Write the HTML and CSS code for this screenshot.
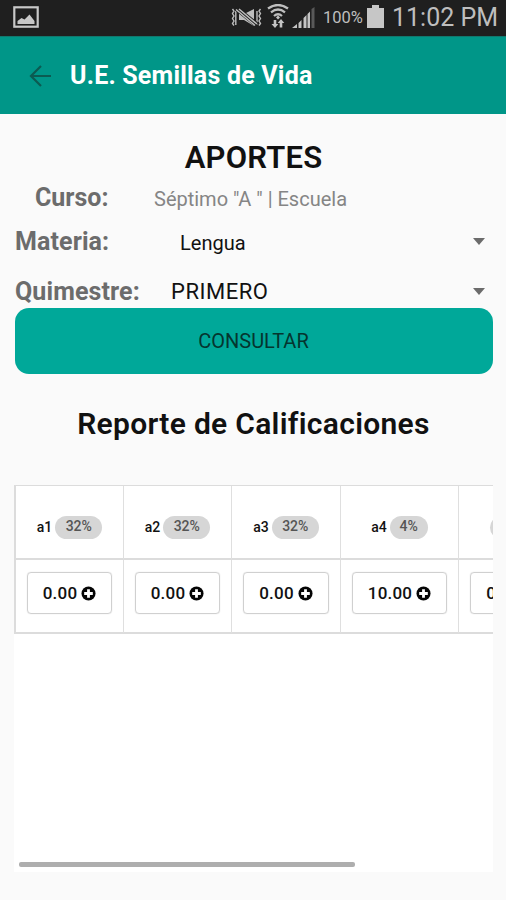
FILE: index.html
```html
<!DOCTYPE html>
<html lang="es">
<head>
<meta charset="utf-8">
<title>U.E. Semillas de Vida</title>
<link rel="stylesheet" href="styles.css">
</head>
<body>
<svg class="defs" width="0" height="0" aria-hidden="true">
  <symbol id="plus" viewBox="0 0 16 16">
    <circle cx="8" cy="8" r="7.5"/>
    <path d="M8 3.4v9.2M3.4 8h9.2" stroke="#fff" stroke-width="3"/>
  </symbol>
</svg>
<header class="status">
  <svg class="picture" width="27" height="24" viewBox="0 0 27 24">
    <rect x="1.3" y="1.3" width="23.4" height="19.4" fill="none" stroke="#c8c8c8" stroke-width="2.2"/>
    <path d="M4.500 18v-3l4-3 3 1.500 5-5 5 6.500v3z" fill="#c8c8c8"/>
  </svg>
  <svg class="mute" width="31" height="22" viewBox="0 0 31 22">
    <g fill="none" stroke="#bebebe" stroke-width="1.4">
      <path d="M1.5 2l1.500 2-1.500 2.500 1.500 2.500-1.500 2.500 1.500 2.500-1.500 2.500 1.500 2M4.800 4v14M29.500 2l-1.500 2 1.500 2.500-1.500 2.500 1.500 2.500-1.500 2.500 1.500 2.500-1.500 2M26 4v14"/>
    </g>
    <path d="M8 7h5l10-5v17l-10-6H8z" fill="#bebebe"/>
    <path d="M5 1l21 17" stroke="#1f1f1f" stroke-width="5"/>
    <path d="M5 2.500l19 16M8 2l18 15" stroke="#bebebe" stroke-width="1.500"/>
  </svg>
  <svg class="wifi" width="22" height="25" viewBox="0 0 22 25">
    <g fill="none" stroke="#bebebe" stroke-width="2.300">
      <path d="M1 4.500q10-7 20 0M4 8.300q7-5.500 14 0M7 12q4-3.500 8 0"/>
    </g>
    <path d="M11 11.500l2 2-2 2-2-2zM6.700 16h2.600v4h2L8 24l-3.500-4h2.200zM14 15l3.300 4h-2v4.500h-2.600V19h-2z" fill="#c4c4c4"/>
  </svg>
  <svg class="signal" width="23" height="22" viewBox="0 0 23 22">
    <path d="M0 21l5-4v4zM6.500 16l3-3v8h-3zM11.500 11l3-3v13h-3zM15.500 7L18 4.500V21h-2.500z" fill="#c4c4c4"/>
    <path d="M19.500 2l3-2v21h-3z" fill="#595959"/>
  </svg>
  <span class="percent">100%</span>
  <svg class="battery" width="17" height="24" viewBox="0 0 17 24"><path d="M5 0h7v3h5v20H0V3h5z" fill="#c6c6c6"/></svg>
  <span class="clock">11:02 PM</span>
</header>
<nav class="appbar">
  <svg class="back" width="23" height="22" viewBox="0 0 23 22"><path d="M22 11H2M12 1L2 11l10 10" fill="none" stroke="#0b5b52" stroke-width="2.200"/></svg>
  <span class="brand">U.E. Semillas de Vida</span>
</nav>
<main>
  <h1><span>APORTES</span></h1>
  <section class="form">
    <div class="row course"><b class="label">Curso:</b><span class="value">Séptimo "A " | Escuela</span></div>
    <div class="row subject"><b class="label">Materia:</b><span class="value">Lengua</span><i class="caret"></i></div>
    <div class="row term"><b class="label">Quimestre:</b><span class="value">PRIMERO</span><i class="caret"></i></div>
  </section>
  <button class="query"><span>CONSULTAR</span></button>
  <h2><span>Reporte de Calificaciones</span></h2>
  <section class="report">
    <div class="grades">
      <div class="cell head"><span class="name">a1</span><span class="badge">32%</span></div>
      <div class="cell head"><span class="name">a2</span><span class="badge">32%</span></div>
      <div class="cell head"><span class="name">a3</span><span class="badge">32%</span></div>
      <div class="cell head"><span class="name">a4</span><span class="badge small">4%</span></div>
      <div class="cell head last"><span class="badge"></span></div>
      <div class="cell"><span class="grade">0.00<svg width="15" height="15"><use href="#plus"/></svg></span></div>
      <div class="cell"><span class="grade">0.00<svg width="15" height="15"><use href="#plus"/></svg></span></div>
      <div class="cell"><span class="grade">0.00<svg width="15" height="15"><use href="#plus"/></svg></span></div>
      <div class="cell"><span class="grade">10.00<svg width="15" height="15"><use href="#plus"/></svg></span></div>
      <div class="cell last"><span class="grade">0.00<svg width="15" height="15"><use href="#plus"/></svg></span></div>
    </div>
    <div class="scrollbar"></div>
  </section>
</main>
</body>
</html>
```

FILE: styles.css
```css
* { box-sizing: border-box; }
body { margin: 0; height: 900px; overflow: hidden; background: #fafafa; color: #111; font-family: Roboto, "Noto Sans", sans-serif; }
.defs { display: none; }
svg { display: block; flex: none; }
span, b { white-space: nowrap; }

.status { display: flex; height: 36px; background: #1f1f1f; color: #bebebe; align-items: flex-start; }
.picture { margin: 6px 0 0 13px; }
.mute { margin: 7px 0 0 191px; }
.wifi { margin: 4px 0 0 5px; }
.signal { margin: 7px 0 0 3px; }
.percent { width: 41px; margin: 8px 0 0 8px; font-size: 16.500px; line-height: 20px; }
.battery { margin: 5px 0 0 3px; }
.clock { margin: 2px 0 0 8px; font-size: 25px; line-height: 31px; }

.appbar { display: flex; align-items: center; height: 78px; padding-left: 29px; background: #009688; border-top: 1px solid #12786e; }
.brand { margin-left: 18px; padding-top: 1px; color: #fff; font-size: 25px; font-weight: 700; line-height: 30px; letter-spacing: .2px; }

main { padding: 0 13px 0 14px; }
h1, h2 { margin: 0; font-weight: 600; text-align: center; }
h1 { height: 61px; padding-top: 25px; font-size: 31px; line-height: 38px; letter-spacing: .2px; }
.form { height: 133px; }
.row { display: flex; height: 44px; align-items: center; }
.row.term { height: 56px; }
.label { width: 138px; color: #6c6c6c; font-size: 25px; font-weight: 700; }
.subject .label, .term .label { margin-left: 1px; width: 137px; letter-spacing: .1px; }
.course .label { width: 119px; margin-left: 21px; }
.course .value { color: #858585; font-size: 20px; margin-top: 3px; }
.subject .value { margin-left: 28px; font-size: 20px; margin-top: 3px; }
.term .value { margin-left: 19px; font-size: 22px; letter-spacing: .5px; }
.caret { margin: 1px 8px 0 auto; border: solid transparent; border-width: 7px 6.500px 0; border-top-color: #6b6b6b; }

.query { display: block; width: 478px; height: 66px; margin-left: .5px; padding: 0; border: 0; border-radius: 14px; background: #00a899; color: #05352f; font: 400 20px/24px Roboto, sans-serif; text-align: center; }
h2 { height: 111px; padding-top: 32px; font-size: 30px; line-height: 36px; letter-spacing: .3px; }

.report { height: 387px; overflow: hidden; background: #fff; }
.grades { display: grid; grid-template-columns: 108px 108px 109px 118px 109px; grid-template-rows: 74px 73px; width: 554px; height: 149px; border: 2px solid #dcdcdc; border-width: 1px 0 2px 2px; font-size: 14px; }
.cell { padding: 12px 11px 19px 11px; border-right: 1px solid #dfdfdf; }
.head { display: flex; align-items: center; justify-content: center; padding: 10px 0 0; border-bottom: 2px solid #dcdcdc; }
.head.last { justify-content: flex-start; padding-left: 31px; }
.name { font-weight: 500; margin-right: 3px; }
.badge { width: 47px; height: 23px; border-radius: 12px; background: #d6d6d6; color: #555; font-weight: 500; line-height: 21px; text-align: center; }
.badge.small { width: 38px; }
.grade { display: flex; align-items: center; justify-content: center; height: 42px; border: 1.500px solid #d0d0d0; border-radius: 4px; font-size: 17px; font-weight: 500; letter-spacing: .2px; box-shadow: 0 0 1px #ccc; }
.grade svg { margin-left: 4px; fill: #050505; }
.scrollbar { width: 336px; height: 5px; margin: 228px 0 0 5px; border-radius: 2px; background: #aeaeae; }
```
